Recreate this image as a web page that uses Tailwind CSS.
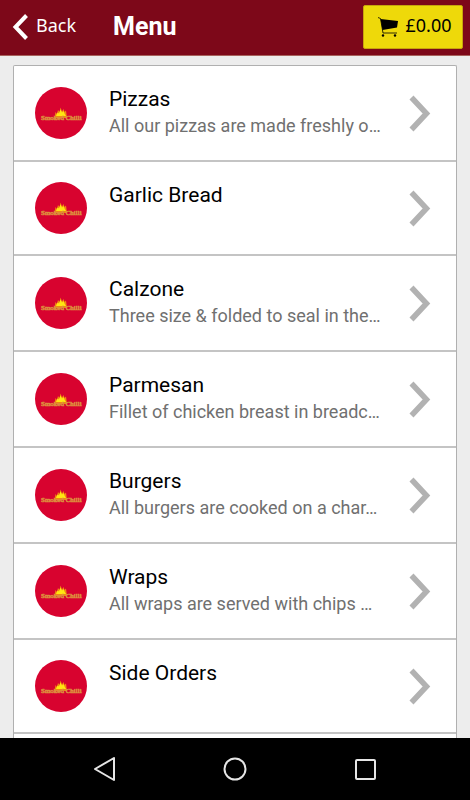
<!DOCTYPE html>
<html lang="en">

<head>
  <meta charset="UTF-8">
  <meta name="viewport" content="width=device-width, initial-scale=1.0">
  <script src="https://cdn.jsdelivr.net/npm/@tailwindcss/browser@4"></script>
  <title>Menu</title>
</head>

<body class="bg-[#ededed] font-['Roboto',sans-serif]">
  <!-- shared shapes -->
  <svg class="hidden">
    <symbol id="logo" viewBox="0 0 52 52">
      <circle cx="26" cy="26" r="26" fill="#d8032f" />
      <path d="M19.500 31 L20.500 25 L22 27 L23 23 L24.500 25 L25.500 20.500 L27 24.500 L28.500 22 L29.500 25 L31 23.500 L32 31Z" fill="#f08a10" />
      <path d="M21 29 L22.500 25.500 L24 26.500 L25.500 22.500 L27 25.500 L28.500 24 L29.500 26.500 L31 29Z" fill="#ffe612" />
      <text x="6" y="33" font-family="Liberation Serif, serif" font-size="7" fill="#e8a24a" stroke="#dc8c3c" stroke-width="0.600">Smoked Chilli</text>
    </symbol>
    <symbol id="arrow" viewBox="0 0 22 37">
      <path d="M2.500 2.500 L17.500 18.500 L2.500 34.500" fill="none" stroke="#b2b2b2" stroke-width="5.500" />
    </symbol>
  </svg>

  <div class="flex flex-col h-screen">
    <header class="flex items-center justify-between shrink-0 h-14 pl-3 pr-[7px] pb-px bg-[#7d0819] border-b border-[#a8625c] text-white">
      <div class="flex items-center">
        <a href="#" class="flex items-center gap-2 w-[101px] font-['Noto_Sans',sans-serif] text-lg">
          <svg class="w-4 h-[26px]" viewBox="0 0 16 26">
            <path d="M14.500 1.500 L3.500 13 L14.500 24.500" fill="none" stroke="#fff" stroke-width="4" />
          </svg>
          <span class="pb-1">Back</span>
        </a>
        <h1 class="text-[25px] font-bold">Menu</h1>
      </div>
      <button class="flex items-center justify-center gap-[7px] w-[100px] h-11 pl-1 rounded-xs bg-[#eed90a] border border-[#c7a50c] text-black font-['Noto_Sans',sans-serif] text-lg">
        <svg class="w-5 h-5" viewBox="0 0 20 20">
          <path d="M2.500 2 L20 4 L19 10.500 L4.500 13Z" />
          <path d="M0 0.500 L2.500 1.500 L5 16 H19" fill="none" stroke="#000" stroke-width="0.800" />
          <circle cx="5" cy="18.500" r="1.200" />
          <circle cx="17" cy="18.500" r="1.200" />
        </svg>
        <span class="pb-1">£0.00</span>
      </button>
    </header>

    <main class="flex-1 min-h-0 overflow-hidden px-[13px] pt-[9px]">
      <ul class="bg-white border border-b-0 border-[#b0b0b0] rounded-t-xs">
        <li class="border-b-2 border-[#c4c4c4]">
          <a href="#" class="flex items-center py-5 pl-[21px] pr-[25px]">
            <svg class="w-[52px] h-[52px] shrink-0"><use href="#logo" /></svg>
            <div class="flex-1 min-w-0 self-start pl-[22px]">
              <h2 class="text-[21px] leading-[26px] text-black">Pizzas</h2>
              <p class="text-lg leading-7 text-[#707070] whitespace-nowrap">All our pizzas are made freshly o…</p>
            </div>
            <svg class="w-[22px] h-[37px] shrink-0"><use href="#arrow" /></svg>
          </a>
        </li>
        <li class="border-b-2 border-[#c4c4c4]">
          <a href="#" class="flex items-center py-5 pl-[21px] pr-[25px]">
            <svg class="w-[52px] h-[52px] shrink-0"><use href="#logo" /></svg>
            <div class="flex-1 min-w-0 self-start pl-[22px]">
              <h2 class="text-[21px] leading-[26px] text-black">Garlic Bread</h2>
            </div>
            <svg class="w-[22px] h-[37px] shrink-0"><use href="#arrow" /></svg>
          </a>
        </li>
        <li class="border-b-2 border-[#c4c4c4]">
          <a href="#" class="flex items-center py-5 pl-[21px] pr-[25px]">
            <svg class="w-[52px] h-[52px] shrink-0"><use href="#logo" /></svg>
            <div class="flex-1 min-w-0 self-start pl-[22px]">
              <h2 class="text-[21px] leading-[26px] text-black">Calzone</h2>
              <p class="text-lg leading-7 text-[#707070] whitespace-nowrap">Three size &amp; folded to seal in the…</p>
            </div>
            <svg class="w-[22px] h-[37px] shrink-0"><use href="#arrow" /></svg>
          </a>
        </li>
        <li class="border-b-2 border-[#c4c4c4]">
          <a href="#" class="flex items-center py-5 pl-[21px] pr-[25px]">
            <svg class="w-[52px] h-[52px] shrink-0"><use href="#logo" /></svg>
            <div class="flex-1 min-w-0 self-start pl-[22px]">
              <h2 class="text-[21px] leading-[26px] text-black">Parmesan</h2>
              <p class="text-lg leading-7 text-[#707070] whitespace-nowrap">Fillet of chicken breast in breadc…</p>
            </div>
            <svg class="w-[22px] h-[37px] shrink-0"><use href="#arrow" /></svg>
          </a>
        </li>
        <li class="border-b-2 border-[#c4c4c4]">
          <a href="#" class="flex items-center py-5 pl-[21px] pr-[25px]">
            <svg class="w-[52px] h-[52px] shrink-0"><use href="#logo" /></svg>
            <div class="flex-1 min-w-0 self-start pl-[22px]">
              <h2 class="text-[21px] leading-[26px] text-black">Burgers</h2>
              <p class="text-lg leading-7 text-[#707070] whitespace-nowrap">All burgers are cooked on a char…</p>
            </div>
            <svg class="w-[22px] h-[37px] shrink-0"><use href="#arrow" /></svg>
          </a>
        </li>
        <li class="border-b-2 border-[#c4c4c4]">
          <a href="#" class="flex items-center py-5 pl-[21px] pr-[25px]">
            <svg class="w-[52px] h-[52px] shrink-0"><use href="#logo" /></svg>
            <div class="flex-1 min-w-0 self-start pl-[22px]">
              <h2 class="text-[21px] leading-[26px] text-black">Wraps</h2>
              <p class="text-lg leading-7 text-[#707070] whitespace-nowrap">All wraps are served with chips …</p>
            </div>
            <svg class="w-[22px] h-[37px] shrink-0"><use href="#arrow" /></svg>
          </a>
        </li>
        <li class="border-b-2 border-[#c4c4c4]">
          <a href="#" class="flex items-center py-5 pl-[21px] pr-[25px]">
            <svg class="w-[52px] h-[52px] shrink-0"><use href="#logo" /></svg>
            <div class="flex-1 min-w-0 self-start pl-[22px]">
              <h2 class="text-[21px] leading-[26px] text-black">Side Orders</h2>
            </div>
            <svg class="w-[22px] h-[37px] shrink-0"><use href="#arrow" /></svg>
          </a>
        </li>
        <li class="h-24"></li>
      </ul>
    </main>

    <!-- android navigation -->
    <nav class="flex items-center justify-center gap-[106px] shrink-0 h-[62px] bg-black">
      <button aria-label="Back">
        <svg class="w-6 h-6" viewBox="0 0 24 24" fill="none" stroke="#e6e6e6" stroke-width="2">
          <path d="M21 1 V23 L2 12Z" stroke-linejoin="round" />
        </svg>
      </button>
      <button aria-label="Home">
        <svg class="w-6 h-6" viewBox="0 0 24 24" fill="none" stroke="#e6e6e6" stroke-width="2">
          <circle cx="12" cy="12" r="10.500" />
        </svg>
      </button>
      <button aria-label="Recent apps">
        <svg class="w-6 h-6" viewBox="0 0 24 24" fill="none" stroke="#e6e6e6" stroke-width="2">
          <rect x="3" y="3" width="19" height="19" rx="1" />
        </svg>
      </button>
    </nav>
  </div>
</body>

</html>
